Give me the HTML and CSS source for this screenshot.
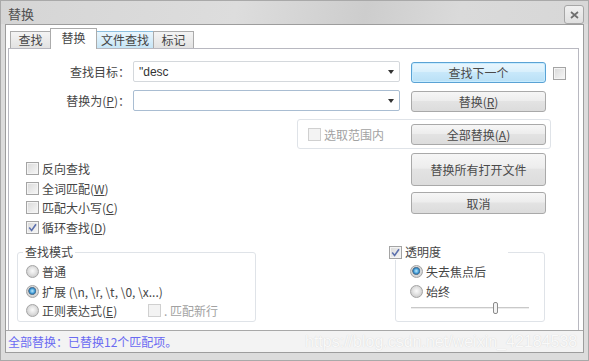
FILE: index.html
```html
<!DOCTYPE html>
<html lang="zh-CN">
<head>
  <meta charset="UTF-8">
  <title>替换</title>
  <link rel="stylesheet" href="styles.css">
</head>
<body>

  <div class="window">
    <div class="titlebar">
      <span class="title">替换</span>
      <span class="close">
        <svg width="9" height="8" viewBox="0 0 9 8"><path d="M1 1 L8 7 M8 1 L1 7" stroke="#6f6f6f" stroke-width="1.7" fill="none"/></svg>
      </span>
    </div>

    <div class="client">
      <!-- tab strip -->
      <div class="tabs">
        <span class="tab t-find">查找</span>
        <span class="tab t-replace active">替换</span>
        <span class="tab t-files hover">文件查找</span>
        <span class="tab t-mark">标记</span>
      </div>

      <div class="panel">
        <div class="field-row">
          <span class="field-label">查找目标：</span>
          <div class="combo"><span class="combo-text">"desc</span><span class="arrow"></span></div>
          <button class="btn btn-default">查找下一个</button>
          <span class="check"></span>
        </div>

        <div class="field-row">
          <span class="field-label">替换为(<u>P</u>)：</span>
          <div class="combo focus"><span class="combo-text"></span><span class="arrow"></span></div>
          <button class="btn">替换(<u>R</u>)</button>
        </div>

        <div class="scope-box">
          <span class="check disabled"></span><span class="muted">选取范围内</span>
          <button class="btn">全部替换(<u>A</u>)</button>
        </div>

        <div class="options">
          <div class="check-list">
            <div class="opt"><span class="check"></span>反向查找</div>
            <div class="opt"><span class="check"></span>全词匹配(<u>W</u>)</div>
            <div class="opt"><span class="check"></span>匹配大小写(<u>C</u>)</div>
            <div class="opt"><span class="check on"></span>循环查找(<u>D</u>)</div>
          </div>
          <div class="btn-col">
            <button class="btn btn-tall">替换所有打开文件</button>
            <button class="btn">取消</button>
          </div>
        </div>

        <div class="groups">
          <!-- search mode -->
          <fieldset class="mode">
            <legend>查找模式</legend>
            <div class="opt"><span class="radio"></span>普通</div>
            <div class="opt"><span class="radio on"></span>扩展 (\n, \r, \t, \0, \x...)</div>
            <div class="opt">
              <span class="radio"></span><span class="regex-label">正则表达式(<u>E</u>)</span>
              <span class="check disabled"></span><span class="muted">. 匹配新行</span>
            </div>
          </fieldset>

          <!-- transparency -->
          <fieldset class="trans">
            <legend><span class="check on"></span>透明度</legend>
            <div class="opt"><span class="radio on"></span>失去焦点后</div>
            <div class="opt"><span class="radio"></span>始终</div>
            <div class="slider">
              <svg width="118" height="14" viewBox="0 0 118 14">
                <line x1="0" y1="6.5" x2="118" y2="6.5" stroke="#c9c9c9" stroke-width="1"/>
                <line x1="0" y1="7.5" x2="118" y2="7.5" stroke="#ededed" stroke-width="1"/>
                <rect x="82.5" y="1.5" width="4" height="11" rx="1.5" fill="#f4f4f4" stroke="#8c8c8c"/>
              </svg>
            </div>
          </fieldset>
        </div>
      </div>

      <div class="status">
        <span class="status-text">全部替换：已替换12个匹配项。</span>
        <span class="watermark">https://blog.csdn.net/weixin_42184538</span>
      </div>
    </div>
  </div>

</body>
</html>
```

FILE: styles.css
```css
* {
  box-sizing: border-box;
}

body {
  margin: 0;
  font-family: "Noto Sans CJK SC", "Noto Sans", sans-serif;
  font-size: 12px;
  color: #454545;
  background: #fff;
}

u {
  text-decoration: underline;
  text-underline-offset: 1px;
}

.window {
  width: 589px;
  height: 361px;
  border: 1px solid #a9a9a9;
  background: #dcdcdc;
  display: flex;
  flex-direction: column;
}

.titlebar {
  height: 23px;
  flex: none;
  display: flex;
  align-items: flex-start;
  padding: 0 4px 0 7px;
  background: linear-gradient(100deg, #d5d5d5 0%, #dddddd 40%, #cdcdcd 62%, #dadada 78%, #d7d7d7 100%);
}

.title {
  margin-top: 5px;
  font-size: 13px;
  line-height: 16px;
  color: #505050;
}

.close {
  margin-left: auto;
  margin-top: 4px;
  width: 20px;
  height: 19px;
  border: 1px solid #a6a6a6;
  border-radius: 3px;
  background: linear-gradient(#f0f0f0, #e0e0e0);
  display: flex;
  align-items: center;
  justify-content: center;
}

.client {
  flex: 1;
  margin: 0 4px 7px;
  border: 1px solid #9d9d9d;
  background: #fff;
  display: flex;
  flex-direction: column;
}

/* tabs */
.tabs {
  height: 23px;
  flex: none;
  display: flex;
  align-items: flex-end;
  padding-left: 4px;
}

.tab {
  height: 17px;
  margin-left: -1px;
  border: 1px solid #ababab;
  border-bottom: none;
  background: linear-gradient(#f4f4f4, #e2e2e2);
  text-align: center;
  line-height: 15px;
  font-size: 12px;
}

.t-find { width: 41px; margin-left: 0; }
.t-replace { width: 47px; }
.t-files { width: 58px; }
.t-mark { width: 41px; }

.tab.active {
  height: 21px;
  margin-bottom: -1px;
  background: #fff;
  line-height: 17px;
  position: relative;
  z-index: 1;
}

.tab.hover {
  border-color: #8cbfdf;
  background: linear-gradient(#eaf6fd, #c6e5f6);
}

.panel {
  flex: 1;
  margin: 0 4px 0 2px;
  border: 1px solid #b8b8c0;
  border-bottom: none;
  padding-top: 12px;
}

/* find / replace rows */
.field-row {
  display: flex;
  align-items: flex-start;
  height: 22px;
  margin-bottom: 7px;
}

.field-label {
  width: 121px;
  text-align: right;
  line-height: 21px;
}

.combo {
  margin-left: 3px;
  width: 267px;
  height: 21px;
  border: 1px solid #d4d8dc;
  border-radius: 2px;
  display: flex;
  align-items: center;
  padding: 0 5px 0 5px;
}

.combo.focus {
  border-color: #a9bdd2;
}

.combo-text {
  flex: 1;
  font-family: "Liberation Sans", sans-serif;
  font-size: 12px;
  color: #333;
}

.arrow {
  width: 0;
  height: 0;
  border-left: 3.5px solid transparent;
  border-right: 3.5px solid transparent;
  border-top: 4px solid #333;
}

.btn {
  font-family: inherit;
  font-size: 12px;
  color: #4a4a4a;
  padding: 0;
  width: 135px;
  height: 21px;
  border: 1px solid #a9a9a9;
  border-radius: 3px;
  background: linear-gradient(#f6f6f6, #ededed 45%, #e3e3e3 50%, #dcdcdc);
  line-height: 19px;
}

.field-row .btn {
  margin-left: 11px;
  margin-top: 1px;
}

.btn-default {
  border-color: #5aa2d4;
  background: linear-gradient(#eaf6fd, #d9f0fc 45%, #c8e8fa 50%, #b9e0f6);
  box-shadow: inset 0 0 0 1px #c7ecff;
}

.btn-tall {
  height: 33px;
}

.field-row .check {
  margin-left: 7px;
  margin-top: 6px;
}

/* checkbox / radio */
.check {
  display: inline-block;
  flex: none;
  width: 13px;
  height: 13px;
  border: 1px solid #a4a4a4;
  background: linear-gradient(135deg, #d9d9d9, #f7f7f7);
  box-shadow: inset 0 0 0 1px #f4f4f4;
  vertical-align: middle;
}

.check.disabled {
  border-color: #d0d0d0;
  background: #f3f3f3;
  box-shadow: none;
}

.check.on {
  background:
    url("data:image/svg+xml;utf8,<svg xmlns='http://www.w3.org/2000/svg' width='11' height='11'><path d='M2.2 5.6 L4.6 8.4 L9 2.2' stroke='%235c70ad' stroke-width='1.6' fill='none'/></svg>") center / 11px 11px no-repeat,
    linear-gradient(135deg, #d9d9d9, #f7f7f7);
}

.radio {
  display: inline-block;
  flex: none;
  width: 13px;
  height: 13px;
  border: 1px solid #a4a4a4;
  border-radius: 50%;
  background: radial-gradient(circle at 50% 45%, #fafafa 0, #e6e6e6 3px, #cfcfcf 6px);
}

.radio.on {
  background:
    radial-gradient(circle at 48% 45%, #bfe6fb 0, #58aee0 2px, #2c78b3 3px, #6d7f8e 3.8px, transparent 4.3px),
    radial-gradient(circle at 50% 45%, #fafafa 0, #e6e6e6 3px, #cfcfcf 6px);
}

.muted {
  color: #a2a2a2;
}

.opt {
  height: 19.5px;
  display: flex;
  align-items: center;
  white-space: nowrap;
}

.opt .check,
.opt .radio {
  margin-right: 3px;
}

/* selection scope */
.scope-box {
  margin: 3px 0 0 288px;
  width: 254px;
  height: 30px;
  border: 1px solid #dfe3e8;
  border-radius: 3px;
  display: flex;
  align-items: center;
  padding: 0 4px 0 10px;
}

.scope-box .check {
  margin-right: 3px;
}

.scope-box .btn {
  margin-left: auto;
}

/* options + side buttons */
.options {
  display: flex;
}

.check-list {
  margin: 10px 0 0 17px;
}

.btn-col {
  margin: 4px 32px 0 auto;
  display: flex;
  flex-direction: column;
  gap: 6px;
}

.btn-col .btn:last-child {
  height: 22px;
}

/* bottom groups */
.groups {
  display: flex;
  margin-top: 7px;
}

fieldset {
  margin: 0;
  border: 1px solid #dfe3e8;
  border-radius: 3px;
  min-width: 0;
}

legend {
  line-height: 16px;
  padding: 0 2px;
}

.mode {
  margin-left: 8px;
  width: 239px;
  padding: 2px 0 0 5px;
}

.mode .opt {
  margin-left: 3px;
}

.regex-label {
  width: 106px;
}

.trans {
  margin-left: 139px;
  width: 150px;
  padding: 2px 0 0 14px;
}

.trans legend {
  width: 119px;
  margin-left: -21px;
  padding: 0;
}

.trans legend .check {
  margin-right: 3px;
  vertical-align: -2px;
}

.slider {
  margin-left: 1px;
  height: 14px;
  line-height: 0;
}

/* status bar */
.status {
  height: 22px;
  flex: none;
  border-top: 1px solid #a8a8a8;
  background: #f3f3f3;
  display: flex;
  align-items: center;
  overflow: hidden;
  padding-left: 2px;
  white-space: nowrap;
}

.status-text {
  width: 297px;
  flex: none;
  color: #6a6af2;
}

.watermark {
  flex: none;
  font-family: "Liberation Sans", sans-serif;
  font-size: 16px;
  color: #f9f9f9;
  text-shadow: 0 0 1px #cfcfcf;
}
```
